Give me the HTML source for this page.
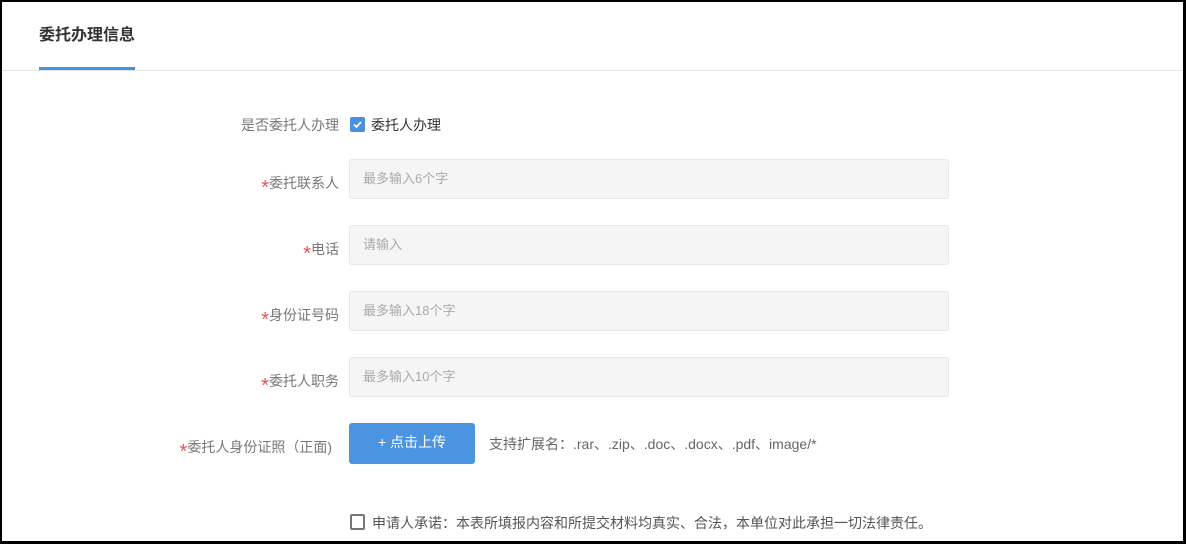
<!DOCTYPE html><html><head><meta charset="utf-8"><style>
*{margin:0;padding:0;box-sizing:border-box}
body{width:1186px;height:544px;background:#000;font-family:"Liberation Sans","Noto Sans CJK SC",sans-serif;position:relative;overflow:hidden}
.card{position:absolute;left:2px;top:2px;width:1181px;height:539px;background:#fff}
.abs{position:absolute}
.title{left:37px;top:19px;font-size:16px;font-weight:bold;color:#333}
.ul{left:37px;top:65px;width:96px;height:3px;background:#4a90e2}
.line{left:0;top:68px;width:1181px;height:1px;background:#e4e4e4}
.lab{font-size:14px;color:#777;text-align:right;width:337px;left:0}
.star{color:#e0555a;font-size:20px;position:relative;top:6px;line-height:10px}
.inp{left:347px;width:600px;height:40px;background:#f5f5f5;border:1px solid #e8e8e8;border-radius:3px;font-size:13px;color:#aaa;padding-left:13px;line-height:38px}
.cb{width:15px;height:15px;border-radius:2px}
</style></head><body><div class="card">
<div class="abs title">委托办理信息</div>
<div class="abs ul"></div><div class="abs line"></div>
<div class="abs lab" style="top:113px">是否委托人办理</div>
<div class="abs cb" style="left:348px;top:115px;background:#4a90e2"><svg width="15" height="15"><path d="M4 7.5l2.5 2.5 4.5-5" stroke="#fff" stroke-width="1.8" fill="none"/></svg></div>
<div class="abs" style="left:369px;top:113px;font-size:14px;color:#333">委托人办理</div>
<div class="abs lab" style="top:171px"><span class="star">*</span>委托联系人</div>
<div class="abs inp" style="top:157px">最多输入6个字</div>
<div class="abs lab" style="top:237px"><span class="star">*</span>电话</div>
<div class="abs inp" style="top:223px">请输入</div>
<div class="abs lab" style="top:303px"><span class="star">*</span>身份证号码</div>
<div class="abs inp" style="top:289px">最多输入18个字</div>
<div class="abs lab" style="top:369px"><span class="star">*</span>委托人职务</div>
<div class="abs inp" style="top:355px">最多输入10个字</div>
<div class="abs lab" style="top:435px;width:330px"><span class="star">*</span>委托人身份证照（正面)</div>
<div class="abs" style="left:347px;top:421px;width:126px;height:41px;background:#4a94e2;border-radius:3px;color:#fff;font-size:14px;line-height:39px;text-align:center">+ 点击上传</div>
<div class="abs" style="left:487px;top:432px;font-size:14px;color:#666">支持扩展名：.rar、.zip、.doc、.docx、.pdf、image/*</div>
<div class="abs cb" style="left:348px;top:512px;border:2px solid #777;width:15px;height:16px"></div>
<div class="abs" style="left:370px;top:511px;font-size:14px;color:#555">申请人承诺：本表所填报内容和所提交材料均真实、合法，本单位对此承担一切法律责任。</div>
</div></body></html>
